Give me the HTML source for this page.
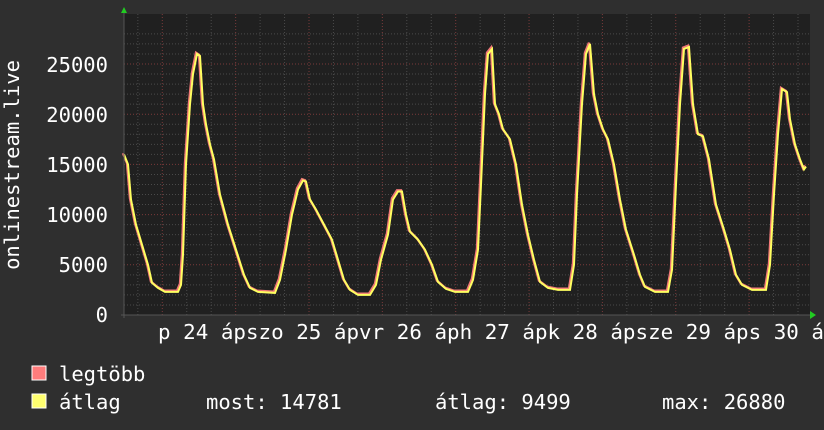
<!DOCTYPE html>
<html><head><meta charset="utf-8"><style>
html,body{margin:0;padding:0;background:#2f2f2f;width:824px;height:430px;overflow:hidden}
svg{display:block}
text{font-family:"DejaVu Sans Mono","Liberation Mono",monospace;fill:#fff;font-size:20.5px}
</style></head><body>
<svg id="s" width="824" height="430" xmlns="http://www.w3.org/2000/svg">
<rect x="0" y="0" width="824" height="430" fill="#2f2f2f"/>
<rect x="124" y="14" width="686" height="301" fill="#202020"/>
<g id="grid"></g>
<polyline id="red" fill="none" stroke="#f07878" stroke-width="2.4"/>
<polyline id="yel" fill="none" stroke="#ffff60" stroke-width="2"/>
<line x1="121" y1="315" x2="812" y2="315" stroke="#555" stroke-width="1"/>
<line x1="124" y1="12" x2="124" y2="318" stroke="#555" stroke-width="1"/>
<polygon points="121,13 124,7 127,13" fill="#2c2"/>
<polygon points="810,311 816,315 810,319" fill="#2c2"/>
<g text-anchor="end">
<text x="108" y="72">25000</text>
<text x="108" y="122">20000</text>
<text x="108" y="172">15000</text>
<text x="108" y="222">10000</text>
<text x="108" y="272">5000</text>
<text x="108" y="322">0</text>
</g>
<text transform="translate(19,165) rotate(-90)" text-anchor="middle">onlinestream.live</text>
<text x="158" y="339" textLength="666" lengthAdjust="spacingAndGlyphs">p 24 ápszo 25 ápvr 26 áph 27 ápk 28 ápsze 29 áps 30 á</text>
<rect x="32" y="366" width="14" height="14" fill="#ff7c7c" stroke="#fff" stroke-width="1"/>
<rect x="32" y="394" width="14" height="14" fill="#ffff70" stroke="#fff" stroke-width="1"/>
<text x="59" y="381">legtöbb</text>
<text x="59" y="409">átlag</text>
<text x="206" y="409">most: 14781</text>
<text x="435" y="409">átlag: 9499</text>
<text x="662" y="409">max: 26880</text>
</svg>
<script>
var g=document.getElementById('grid'),h='';
for(var v=1000;v<=28000;v+=1000){var y=315-v*0.01004;var maj=v%5000==0;
h+='<line x1="124" x2="810" y1="'+y+'" y2="'+y+'" stroke="'+(maj?'#7a3a3a':'#4a4a4a')+'" stroke-dasharray="1,2"/>';}
for(var i=-1;i<28;i++){var x=162.3+i*24.45;if(x<125||x>808)continue;var maj=((i%3)+3)%3==0;
h+='<line y1="14" y2="315" x1="'+x+'" x2="'+x+'" stroke="'+(maj?'#7a3a3a':'#4a4a4a')+'" stroke-dasharray="1,2"/>';}
g.innerHTML=h;
var d=[124,16000,128,15000,131,11500,136,9000,142,7000,148,5000,152,3200,158,2700,165,2300,178,2300,181,3000,183,6000,186,15000,190,21000,193,24000,197,26000,200,25800,203,21000,206,19000,210,17000,214,15500,220,12000,228,9000,236,6500,244,4000,250,2700,258,2300,275,2200,280,3500,286,6500,292,10000,298,12500,303,13400,306,13300,310,11500,316,10500,324,9000,332,7500,338,5500,344,3500,350,2500,358,2000,370,2000,376,3000,381,5500,388,8000,393,11500,398,12300,402,12300,406,10000,410,8300,418,7500,425,6500,432,5000,438,3300,446,2600,455,2300,468,2300,473,3500,478,6500,481,13000,485,22000,488,26000,492,26500,495,21000,499,20000,503,18500,510,17500,516,15000,522,11000,528,8000,534,5500,540,3300,548,2700,558,2500,570,2500,574,5000,577,12000,582,21000,586,26000,590,27000,594,22000,598,20000,603,18500,608,17500,614,15000,620,11500,626,8500,634,6000,640,4000,645,2800,655,2300,668,2300,672,4500,676,13000,680,21000,684,26500,689,26700,693,21000,698,18000,703,17800,709,15500,716,11000,724,8500,730,6500,736,4000,742,3000,752,2500,766,2500,770,5000,774,12000,778,18000,782,22500,787,22200,790,19500,795,17000,800,15500,804,14500,806,14781];
var a='',b='';for(var k=0;k<d.length;k+=2){var y=315-d[k+1]*0.01004;a+=d[k]+','+y+' ';b+=(d[k]-1)+','+(y-1.2)+' ';}
document.getElementById('yel').setAttribute('points',a);document.getElementById('red').setAttribute('points',b);
</script>
</body></html>
